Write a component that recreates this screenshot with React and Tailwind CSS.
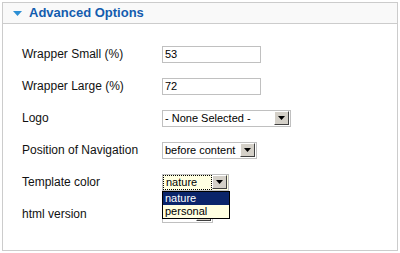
import React from "react";

function ArrowButton() {
  return (
    <span className="flex h-[14px] w-[15px] shrink-0 items-center justify-center border border-t-white border-l-white border-r-[#404040] border-b-[#404040] bg-[#d4d0c8]">
      <svg width="7" height="4" viewBox="0 0 7 4">
        <path d="M0 0h7L3.5 4z" fill="#000" />
      </svg>
    </span>
  );
}

function FakeSelect({ value, width, focused, children }) {
  return (
    <div
      className={`relative flex h-[17px] items-center border border-[#c0c0c0] pr-px ${
        focused ? "bg-[#ffffe1]" : "bg-white"
      }`}
      style={{ width }}
    >
      <span
        className={`flex h-[15px] flex-1 items-center overflow-hidden whitespace-nowrap pl-[2px] leading-none ${
          focused ? "border border-dotted border-black" : ""
        }`}
      >
        {value}
      </span>
      <ArrowButton />
      {children}
    </div>
  );
}

function TextInput({ value }) {
  return (
    <div className="flex h-[17px] w-[99px] items-center border border-[#c0c0c0] bg-white pl-[2px] leading-none">
      {value}
    </div>
  );
}

function Row({ label, children }) {
  return (
    <div className="flex h-[32px] items-center">
      <div className="w-[159px] shrink-0 pl-[19px] text-[12px] text-[#111]">{label}</div>
      {children}
    </div>
  );
}

export default function App() {
  return (
    <div
      className="h-[253px] w-[400px] bg-white pt-[2px] pl-[2px] text-[11px]"
      style={{ fontFamily: '"Liberation Sans", Arial, sans-serif' }}
    >
      <div className="h-[249px] w-[396px] border border-[#cccccc]">
        <div className="flex h-[21px] items-center border-b border-[#cccccc] bg-[#f9f9f9] pl-[10px]">
          <svg width="9" height="5" viewBox="0 0 9 5" className="mr-[7px] mt-[1px]">
            <path d="M0 0h9L4.5 5z" fill="#2d8fd4" />
          </svg>
          <span className="text-[13px] font-bold text-[#135cae]">Advanced Options</span>
        </div>
        <div className="pt-[14px]">
          <Row label="Wrapper Small (%)">
            <TextInput value="53" />
          </Row>
          <Row label="Wrapper Large (%)">
            <TextInput value="72" />
          </Row>
          <Row label="Logo">
            <FakeSelect value="- None Selected -" width={129} />
          </Row>
          <Row label="Position of Navigation">
            <FakeSelect value="before content" width={95} />
          </Row>
          <Row label="Template color">
            <FakeSelect value="nature" width={67} focused>
              <div className="absolute left-[-1px] top-[16px] z-10 w-[68px] border border-black bg-[#ffffe1]">
                <div className="h-[13px] bg-[#0a246a] pl-[2px] leading-[13px] text-white">nature</div>
                <div className="h-[13px] pl-[2px] leading-[13px] text-black">personal</div>
              </div>
            </FakeSelect>
          </Row>
          <Row label="html version">
            <FakeSelect value="" width={51} />
          </Row>
        </div>
      </div>
    </div>
  );
}
